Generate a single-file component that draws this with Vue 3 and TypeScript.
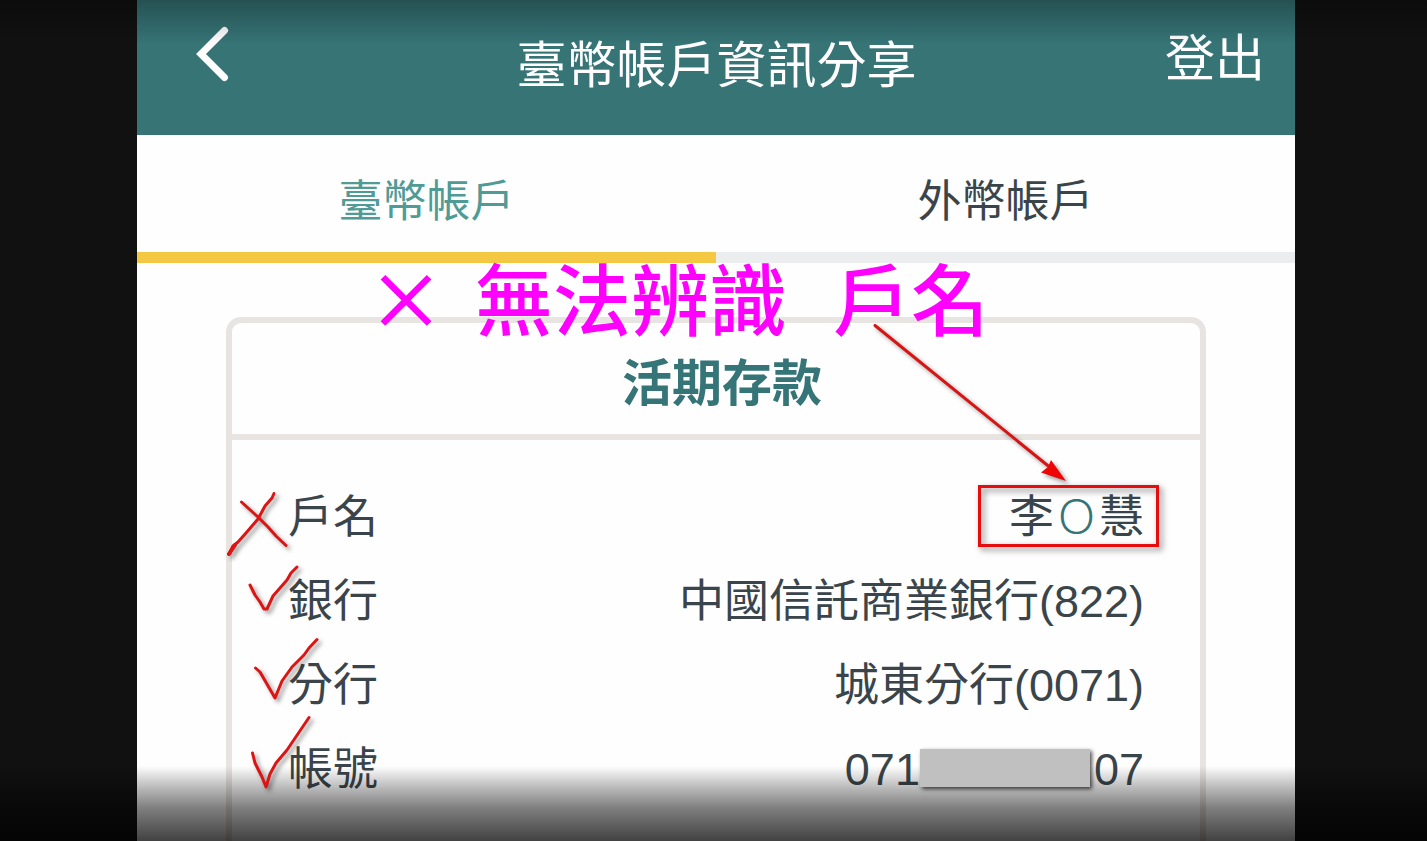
<script setup lang="ts">
import { ref } from 'vue'

interface Row {
  label: string
  value: string
  kind: 'name' | 'text' | 'account'
  tail?: string
}

const tabs = ['臺幣帳戶', '外幣帳戶']
const active = ref(0)

const rows: Row[] = [
  { label: '戶名', value: '李', tail: '慧', kind: 'name' },
  { label: '銀行', value: '中國信託商業銀行(822)', kind: 'text' },
  { label: '分行', value: '城東分行(0071)', kind: 'text' },
  { label: '帳號', value: '071', tail: '07', kind: 'account' },
]
</script>

<template>
  <div class="stage">
    <main class="phone">
      <header class="bar">
        <button class="back" type="button" aria-label="返回">
          <svg width="34" height="56" viewBox="0 0 34 56" fill="none">
            <path d="M28.500 4.500 5 28 28.500 51.500" stroke="#fff" stroke-width="7" stroke-linecap="round" />
          </svg>
        </button>
        <h1 class="title">臺幣帳戶資訊分享</h1>
        <button class="logout" type="button">登出</button>
      </header>

      <nav class="tabs">
        <button
          v-for="(tab, i) in tabs"
          :key="tab"
          type="button"
          class="tab"
          :class="{ active: active === i }"
          @click="active = i"
        >
          {{ tab }}
        </button>
      </nav>

      <div class="content">
        <p class="note">
          <span class="cross">×</span><span>無法辨識</span><span>戶名</span>
        </p>
        <section class="card">
          <h2 class="card-title">活期存款</h2>
          <dl class="rows">
            <div v-for="row in rows" :key="row.label" class="row">
              <dt>{{ row.label }}</dt>
              <dd v-if="row.kind === 'name'" class="name">
                {{ row.value }}<span class="masked">Ｏ</span>{{ row.tail }}
              </dd>
              <dd v-else-if="row.kind === 'account'" class="account">
                <span>{{ row.value }}</span><span class="cover"></span><span>{{ row.tail }}</span>
              </dd>
              <dd v-else>{{ row.value }}</dd>
            </div>
          </dl>

          <svg class="marks" width="120" height="320" viewBox="220 480 120 320" aria-hidden="true">
            <g fill="none" stroke="#dc1414" stroke-width="3" stroke-linecap="round" stroke-linejoin="round">
              <path d="M241.500 502 248 508 258 517 268 527 276 536 286 545.500" />
              <path d="M274 493.500 272 498 265 506 258 519 246 533 238 542 233 546 229 554" />
              <path d="M229 554 235 545" stroke-width="4" />
              <path d="M250 585 255 595 260 602 264 609 267 609 273 596 280 588 287 580 291 573 297 567" />
              <path d="M255.500 668 260 672 275 698 282 681 292 667 304 655 309 648 317 639.500" />
              <path d="M252.500 753 255 763 262 777 266 787 270 774 276 763 287 750 309 717.500" />
            </g>
          </svg>

          <svg class="arrow" width="210" height="170" viewBox="870 320 210 170" aria-hidden="true">
            <path d="M875 325.500 1052 469" fill="none" stroke="#d81414" stroke-width="3" stroke-linecap="round" />
            <path d="M1066 481 1041 472.500 1048 467 1051 460Z" fill="#ee0505" />
          </svg>
        </section>
      </div>
    </main>
    <div class="shade top"></div>
    <div class="shade bottom"></div>
  </div>
</template>

<style>
body {
  margin: 0;
  background: #111;
}
</style>

<style scoped>
.stage {
  position: relative;
  height: 100vh;
  padding: 0 132px 0 137px;
  overflow: hidden;
  background: #111;
  font-family: "Liberation Sans", "Noto Sans CJK TC", sans-serif;
  color: #3a454b;
}

.phone {
  display: flex;
  flex-direction: column;
  height: 100%;
  background: #fefefe;
}

button {
  border: 0;
  padding: 0;
  background: none;
  font: inherit;
  color: inherit;
  cursor: pointer;
}

.bar {
  display: grid;
  grid-template-columns: 1fr auto 1fr;
  align-items: start;
  height: 135px;
  flex: none;
  padding: 0 30px 0 59px;
  box-sizing: border-box;
  background: #367476;
  color: #fff;
  font-size: 50px;
  line-height: 60px;
}

.back {
  justify-self: start;
  width: 34px;
  height: 56px;
  margin-top: 26px;
}

.back svg {
  display: block;
}

.title {
  margin: 36px 28px 0 0;
  font-size: 50px;
  font-weight: 400;
}

.logout {
  justify-self: end;
  margin-top: 29px;
}

.tabs {
  display: flex;
  flex: none;
}

.tab {
  flex: 1;
  height: 128px;
  padding-top: 16px;
  box-sizing: border-box;
  border-bottom: 11px solid #ebedee;
  font-size: 44px;
  line-height: 60px;
}

.tab.active {
  border-color: #f4c842;
  color: #509b95;
}

.content {
  position: relative;
  display: flex;
  flex: 1;
  min-height: 0;
  padding: 54px 89px 0;
}

.note {
  position: absolute;
  z-index: 2;
  top: -12px;
  left: 230px;
  display: flex;
  gap: 46px;
  margin: 0;
  font-family: "Noto Sans CJK TC", sans-serif;
  font-size: 78px;
  line-height: 90px;
  font-weight: 500;
  color: #f0f;
  white-space: nowrap;
}

.cross {
  margin-right: -16px;
}

.card {
  position: relative;
  flex: 1;
  border: 6px solid #e8e4e2;
  border-width: 6px 6px 0;
  border-radius: 15px 15px 0 0;
}

.card-title {
  margin: 0;
  padding: 31px 0 20px 12px;
  border-bottom: 6px solid #e8e4e2;
  font-size: 50px;
  line-height: 60px;
  font-weight: 700;
  text-align: center;
  color: #357477;
}

.rows {
  margin: 0;
  padding: 36px 56px 0;
  font-size: 45px;
  line-height: 84px;
}

.row {
  display: flex;
  justify-content: space-between;
}

dd {
  margin: 0;
}

.name {
  position: relative;
}

.name::after {
  content: "";
  position: absolute;
  inset: 9px -15px 13px -31px;
  border: 3px solid #e50d0d;
  filter: drop-shadow(3px 3px 3px rgba(0, 0, 0, 0.5));
}

.masked {
  color: #357477;
  font-weight: 300;
}

.account {
  display: flex;
  align-items: center;
}

.cover {
  position: relative;
  z-index: 4;
  width: 170px;
  height: 38px;
  margin: 0 4px 4px 0;
  background: #c0c0c0;
  box-shadow: 2px 2px 4px rgba(0, 0, 0, 0.7);
}

.marks,
.arrow {
  position: absolute;
  z-index: 4;
  pointer-events: none;
  filter: drop-shadow(3px 3px 2px rgba(0, 0, 0, 0.4));
}

.marks {
  top: 157px;
  left: -12px;
}

.arrow {
  top: -3px;
  right: 120px;
}

.shade {
  position: absolute;
  z-index: 3;
  left: 0;
  right: 0;
  pointer-events: none;
}

.shade.top {
  top: 0;
  height: 44px;
  background: linear-gradient(rgba(0, 0, 0, 0.3), rgba(0, 0, 0, 0));
}

.shade.bottom {
  bottom: 0;
  height: 75px;
  background: linear-gradient(
    rgba(0, 0, 0, 0),
    rgba(0, 0, 0, 0.28) 30%,
    rgba(0, 0, 0, 0.5) 56%,
    rgba(0, 0, 0, 0.74)
  );
}
</style>
